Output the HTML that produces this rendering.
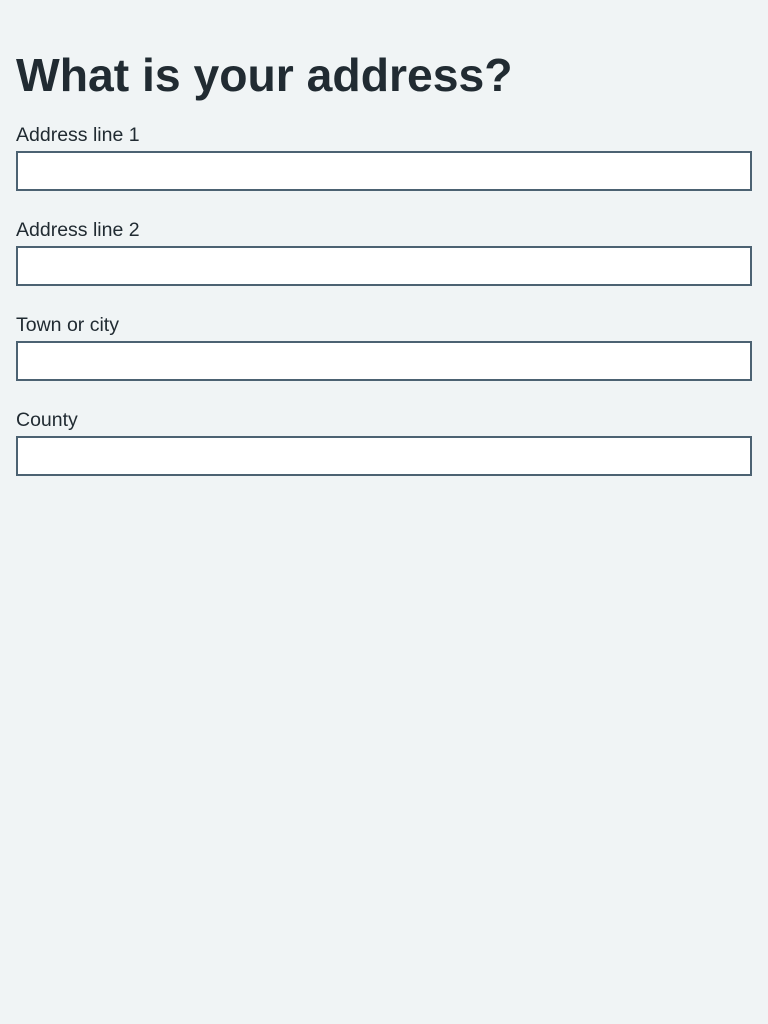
<!DOCTYPE html>
<html><head><style>
body{margin:0;background:#f0f4f5;font-family:"Liberation Sans",sans-serif;color:#212b32;width:768px;height:1024px;overflow:hidden}
h1{position:absolute;left:16px;top:47px;margin:0;font-size:46.3px;font-weight:bold;line-height:56px;letter-spacing:0}
.l{position:absolute;left:16px;font-size:19.5px;line-height:24px}
.i{position:absolute;left:16px;width:732px;height:36px;border:2px solid #4c6272;background:#fff}
</style></head><body>
<h1>What is your address?</h1>
<div class="l" style="top:123px">Address line 1</div><div class="i" style="top:151px"></div>
<div class="l" style="top:218px">Address line 2</div><div class="i" style="top:246px"></div>
<div class="l" style="top:313px">Town or city</div><div class="i" style="top:341px"></div>
<div class="l" style="top:408px">County</div><div class="i" style="top:436px"></div>
</body></html>
